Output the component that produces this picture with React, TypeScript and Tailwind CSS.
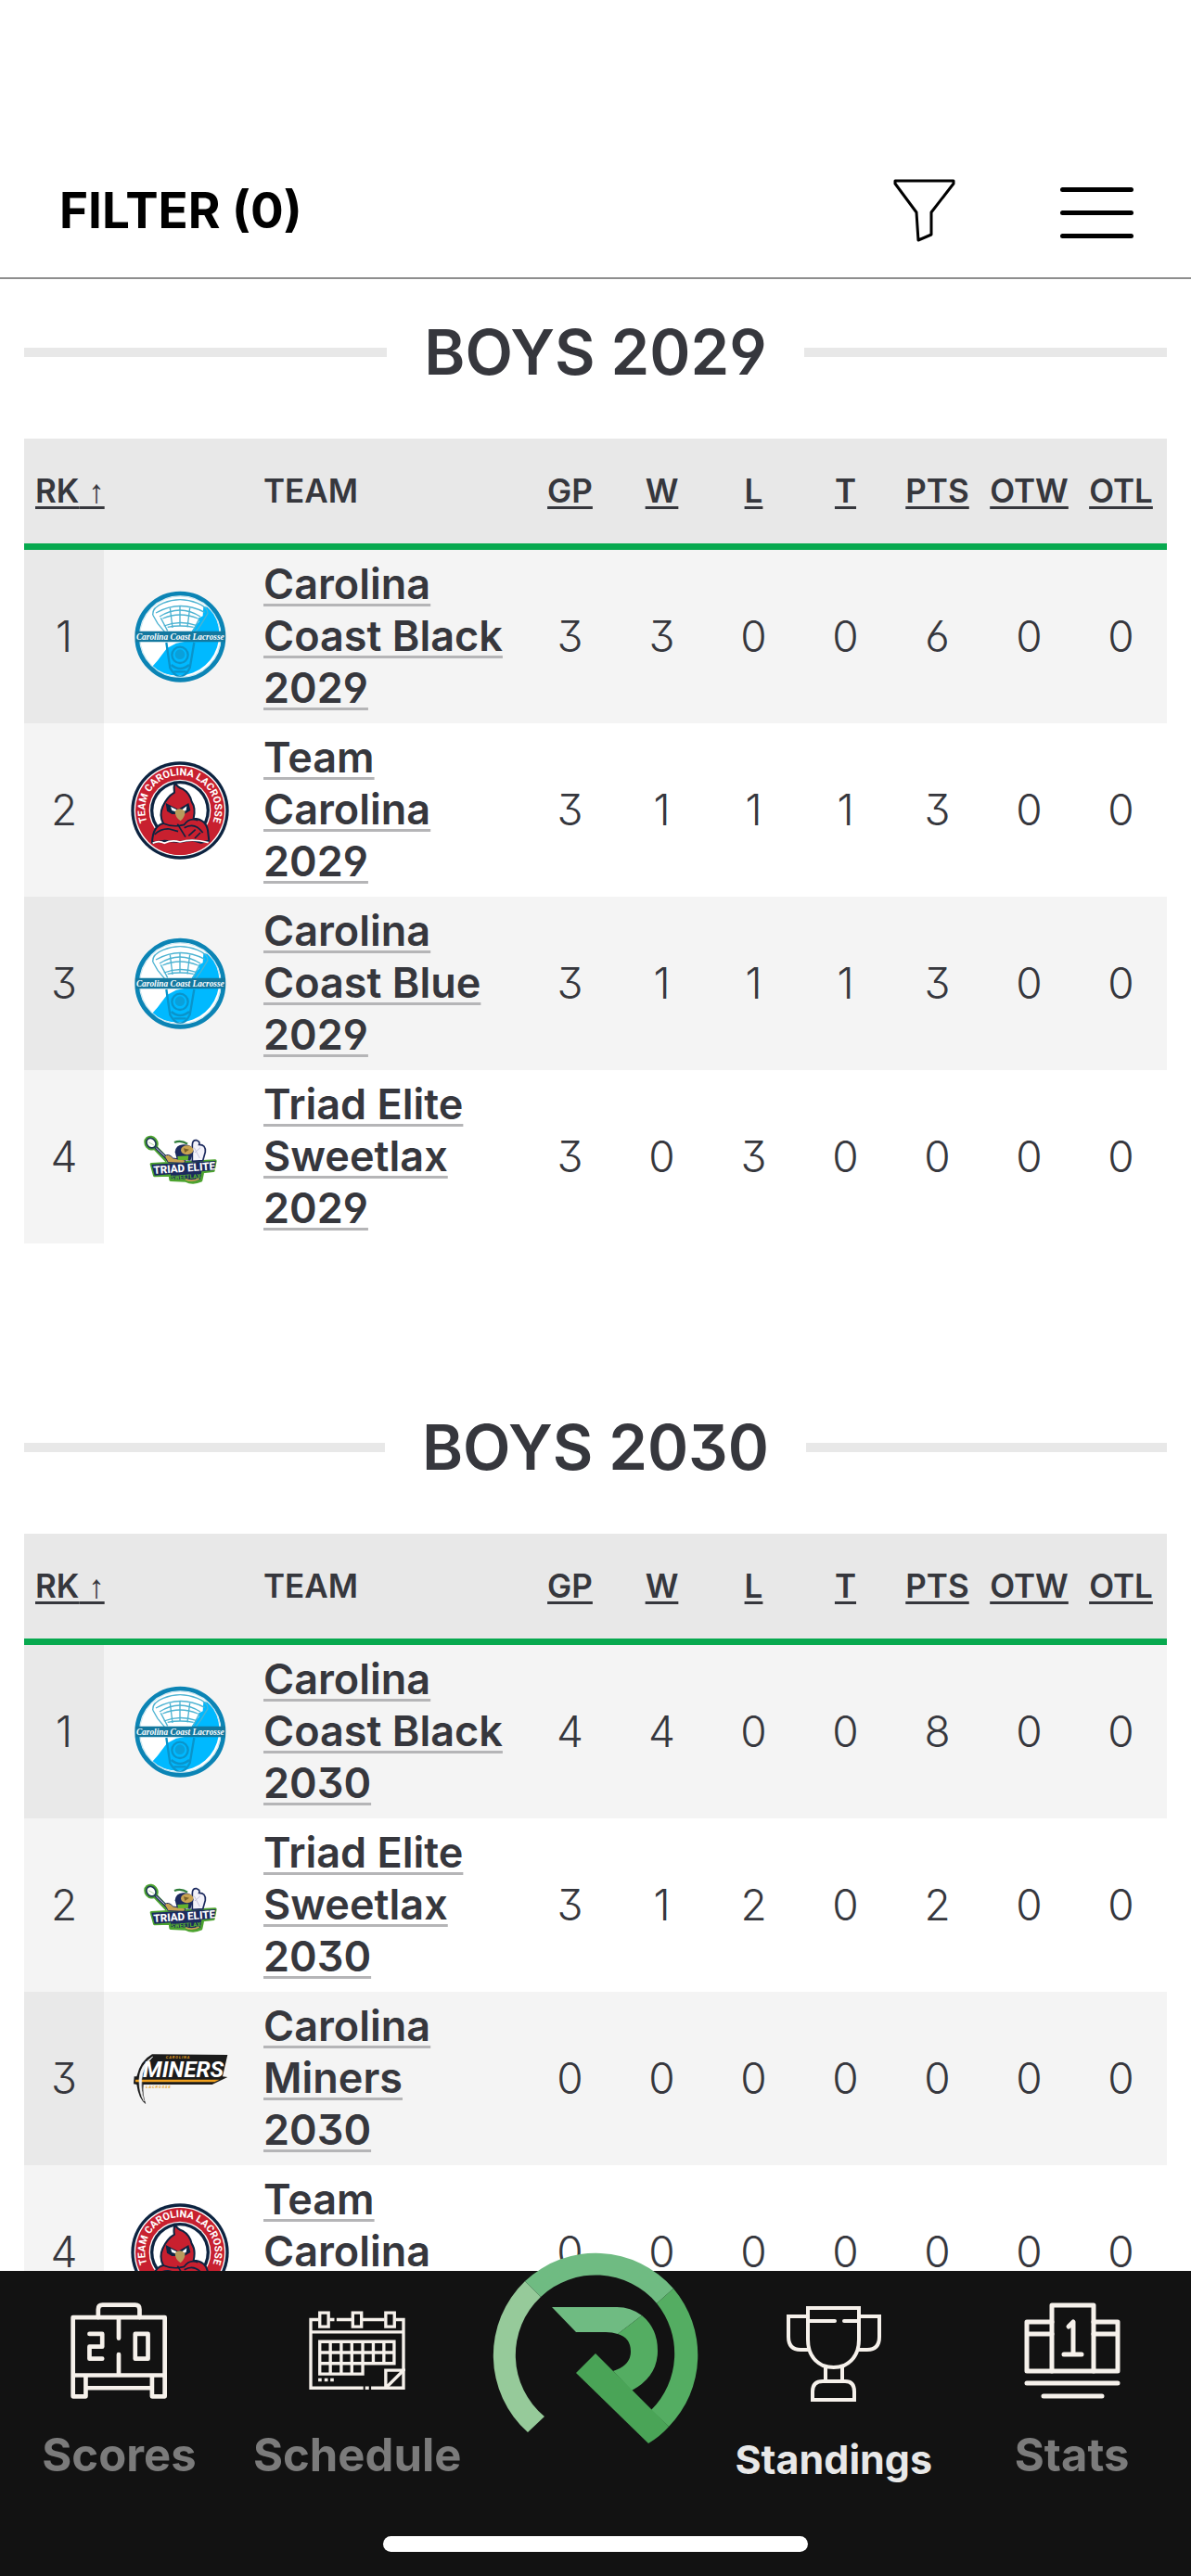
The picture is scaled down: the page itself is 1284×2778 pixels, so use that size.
import { useState } from 'react';
import type { ComponentType } from 'react';

type LogoKey = 'coast' | 'cardinal' | 'triad' | 'miners';

interface Team {
  name: string;
  logo: LogoKey;
  stats: number[];
}

interface Division {
  title: string;
  teams: Team[];
}

const COLUMNS = ['GP', 'W', 'L', 'T', 'PTS', 'OTW', 'OTL'];

const DIVISIONS: Division[] = [
  {
    title: 'BOYS 2029',
    teams: [
      { name: 'Carolina Coast Black 2029', logo: 'coast', stats: [3, 3, 0, 0, 6, 0, 0] },
      { name: 'Team Carolina 2029', logo: 'cardinal', stats: [3, 1, 1, 1, 3, 0, 0] },
      { name: 'Carolina Coast Blue 2029', logo: 'coast', stats: [3, 1, 1, 1, 3, 0, 0] },
      { name: 'Triad Elite Sweetlax 2029', logo: 'triad', stats: [3, 0, 3, 0, 0, 0, 0] },
    ],
  },
  {
    title: 'BOYS 2030',
    teams: [
      { name: 'Carolina Coast Black 2030', logo: 'coast', stats: [4, 4, 0, 0, 8, 0, 0] },
      { name: 'Triad Elite Sweetlax 2030', logo: 'triad', stats: [3, 1, 2, 0, 2, 0, 0] },
      { name: 'Carolina Miners 2030', logo: 'miners', stats: [0, 0, 0, 0, 0, 0, 0] },
      { name: 'Team Carolina 2030', logo: 'cardinal', stats: [0, 0, 0, 0, 0, 0, 0] },
    ],
  },
];

const CoastLogo = () => (
  <svg viewBox="57 35 330 330" className="size-[110px]" aria-hidden="true">
    <circle cx="223" cy="199" r="141" fill="#fff" />
    <path
      d="M298 100 L312 104 L330 122 A134 134 0 0 1 132 296 L150 276 L160 262 L180 236 L210 220 L240 214 L266 172 L284 150 L280 140 L296 132 Z"
      fill="#00b9ff"
    />
    <g fill="none" stroke="#4db3d2" strokeWidth="4">
      <path d="M134 128 Q132 104 168 90 Q222 68 278 90 Q314 104 312 124 L290 160 L268 190" />
      <path d="M134 128 L150 156 L178 190" />
      <path d="M144 122 Q222 78 302 120" />
      <path d="M156 134 Q222 92 288 134" />
      <path d="M166 140 Q222 116 280 140 M170 164 Q222 144 274 162 M182 168 Q222 160 266 168" />
      <path d="M190 106 L198 170 M222 100 L222 164 M254 106 L246 168 M160 138 L182 180 M286 138 L264 180" />
    </g>
    <g fill="none" stroke="#0a94cb" strokeWidth="7">
      <path d="M178 218 L190 300 Q206 328 222 328 Q240 328 254 300 L268 218" />
      <circle cx="222" cy="258" r="26" />
      <path d="M194 290 Q222 314 252 290 M202 312 H242" />
    </g>
    <circle cx="222" cy="256" r="16" fill="#0aa0da" />
    <circle cx="223" cy="199" r="131" fill="none" stroke="#c9e6ef" strokeWidth="3" />
    <circle cx="223" cy="199" r="140" fill="none" stroke="#0b84b5" strokeWidth="14" />
    <path d="M78 181 H368 V216 H78 Z" fill="#13789f" />
    <text
      x="223"
      y="208"
      textAnchor="middle"
      fontSize="28"
      fontStyle="italic"
      fontWeight="700"
      fill="#fff"
      className="font-['Liberation_Serif',serif]"
    >
      Carolina Coast Lacrosse
    </text>
  </svg>
);

const CardinalLogo = () => (
  <svg viewBox="57 29 330 330" className="size-[110px]" aria-hidden="true">
    <circle cx="222" cy="194" r="158" fill="#0c2340" />
    <circle cx="222" cy="194" r="148" fill="#fff" />
    <circle cx="222" cy="194" r="144" fill="#c8202f" />
    <circle cx="222" cy="194" r="100" fill="#fff" />
    <circle cx="222" cy="194" r="96" fill="#0c2340" />
    <circle cx="222" cy="194" r="86" fill="#fff" />
    <path d="M128 290 Q175 306 222 290 Q270 306 316 290 Q284 338 222 338 Q160 338 128 290 Z" fill="#c8202f" />
    <path
      d="M132 298 Q134 244 168 236 Q154 210 166 182 Q180 150 204 136 Q200 120 206 104 Q214 120 230 124 Q254 138 260 166 Q274 186 266 220 Q306 222 312 258 L316 292 L290 298 L262 290 L222 296 L172 292 Z"
      fill="#c8202f"
      stroke="#0c2340"
      strokeWidth="6"
      strokeLinejoin="round"
    />
    <path d="M134 300 Q154 290 172 300 Q196 288 222 296 Q262 284 314 298" fill="none" stroke="#fff" strokeWidth="5" />
    <path d="M176 170 L216 190 L250 170 L256 194 L236 206 L196 206 L180 196 Z" fill="#0c2340" />
    <path d="M192 182 L212 192 L208 198 L196 194 Z M244 180 L228 192 L232 198 L242 194 Z" fill="#fff" />
    <path d="M206 196 Q220 182 238 196 Q240 214 224 228 Q206 216 206 196 Z" fill="#b89b5c" />
    <path
      d="M140 272 Q160 252 188 254 L216 262 M168 236 Q200 250 236 240 Q252 216 280 226 M214 238 L240 280 M236 250 Q270 230 296 266 M250 276 L272 256 M270 284 L288 266"
      fill="none"
      stroke="#0c2340"
      strokeWidth="5"
    />
    <path id="cardinal-arc" d="M126 253 A113 113 0 1 1 318 253" fill="none" />
    <text fontSize="33" fontWeight="700" fill="#fff" className="font-['Roboto',sans-serif]">
      <textPath href="#cardinal-arc" startOffset="50%" textAnchor="middle">
        TEAM CAROLINA LACROSSE
      </textPath>
    </text>
  </svg>
);

const TriadLogo = () => (
  <svg viewBox="57 10 330 330" className="size-[110px]" aria-hidden="true">
    <g fill="#4ca32f" stroke="#4ca32f" strokeWidth="10" strokeLinejoin="round">
      <ellipse cx="129" cy="129" rx="17" ry="20" transform="rotate(-40 129 129)" />
      <path d="M144 146 L182 186" strokeWidth="16" />
      <path d="M130 198 L336 187 L330 218 L296 222 L290 250 Q264 262 240 250 L192 248 L190 232 L140 234 Z" />
    </g>
    <path d="M204 127 Q226 118 246 132" fill="none" stroke="#2f7d3a" strokeWidth="7" />
    <path d="M262 136 Q262 118 276 120 Q288 124 284 134 Q306 134 304 158 L296 186 L262 188 Z" fill="#f3f2fa" stroke="#1c2a5e" strokeWidth="5" />
    <path d="M268 144 L286 178 M288 144 L270 160" stroke="#c3c1dc" strokeWidth="3" />
    <ellipse cx="129" cy="129" rx="14" ry="17" transform="rotate(-40 129 129)" fill="#fff" stroke="#1d3b54" strokeWidth="5" />
    <path d="M120 126 L138 136" stroke="#b5dba6" strokeWidth="3" />
    <path d="M143 143 L186 184" stroke="#1c2a5e" strokeWidth="9" />
    <path d="M145 145 L174 172" stroke="#dfe3ea" strokeWidth="3" />
    <path d="M172 172 Q184 160 200 178 L240 184 L236 194 L184 192 Z" fill="#c9a352" stroke="#1c2a5e" strokeWidth="3" />
    <path d="M206 158 Q208 136 232 134 Q262 132 266 156 L256 186 L212 182 Z" fill="#1c2a5e" />
    <ellipse cx="245" cy="152" rx="20" ry="15" fill="#c9a352" />
    <path d="M234 146 L252 150 L238 160 Z" fill="#7a5f28" />
    <path d="M214 172 L250 170 L248 184 L216 184 Z" fill="#63b32e" />
    <path d="M130 198 L338 187 L332 217 L292 221 L288 246 Q262 258 240 246 L194 246 L192 230 L140 234 Z" fill="#1c2a5e" />
    <path d="M240 246 Q262 256 284 244" stroke="#c9a352" strokeWidth="5" fill="none" />
    <text
      x="236"
      y="222"
      textAnchor="middle"
      fontSize="35"
      fontWeight="800"
      fill="#fff"
      transform="rotate(-4 236 210)"
      className="font-['Roboto',sans-serif]"
    >
      TRIAD ELITE
    </text>
    <text
      x="241"
      y="245"
      textAnchor="middle"
      fontSize="19"
      fontWeight="800"
      fill="#58b030"
      transform="rotate(-3 241 240)"
      className="font-['Roboto',sans-serif]"
    >
      SWEETLAX
    </text>
  </svg>
);

const MinersLogo = () => (
  <svg viewBox="57 -7 330 330" className="size-[110px]" aria-hidden="true">
    <path
      d="M132 78 L376 80 L360 150 L376 152 L326 176 L104 176 Q100 206 112 240 Q88 222 82 176 L72 174 L74 150 L82 150 Q94 98 132 78 Z"
      fill="#1b1b1b"
    />
    <path d="M78 160 H350 L334 168 H78 Z" fill="#f0a01e" />
    <path d="M134 86 Q92 112 90 160 Q90 206 106 230 Q96 196 98 160 Q102 118 134 86 Z" fill="#f2f2f2" stroke="#f2f2f2" strokeWidth="2" />
    <text
      x="102"
      y="152"
      fontSize="73"
      fontWeight="700"
      fontStyle="italic"
      fill="#fff"
      className="font-['Roboto',sans-serif]"
    >
      MINERS
    </text>
    <g fontSize="12" fontWeight="700" fontStyle="italic" fill="#e8a020" className="font-['Roboto',sans-serif]">
      <text x="176" y="93">C  A  R  O  L  I  N  A</text>
      <text x="112" y="188">L  A  C  R  O  S  S  E</text>
    </g>
  </svg>
);

const LOGOS: Record<LogoKey, ComponentType> = {
  coast: CoastLogo,
  cardinal: CardinalLogo,
  triad: TriadLogo,
  miners: MinersLogo,
};

const ScoresIcon = () => (
  <svg viewBox="232 430 310 310" className="size-[104px]" fill="none" stroke="#f6f1eb" strokeWidth="14" strokeLinejoin="round" strokeLinecap="round" aria-hidden="true">
    <path d="M240 478 H535 V732 H494 V664 M240 478 V732 H281 V664 M240 664 H535 M281 705 H494" />
    <path d="M321 478 V452 Q321 438 335 438 H440 Q454 438 454 452 V478" />
    <path d="M387 480 V545 M387 597 V662" />
    <path d="M293 531 H334 V572 H293 V611 H334 M440 531 H481 V611 H440 Z" />
  </svg>
);

const ScheduleIcon = () => (
  <svg viewBox="1003 431 310 310" className="size-[104px]" fill="none" stroke="#f6f1eb" strokeWidth="10" aria-hidden="true">
    <path d="M1034 486 H1009 V706 H1178 M1184 706 H1196 M1203 706 H1307 V486 H1282" />
    <path d="M1070 486 H1085 M1092 486 H1141 M1175 486 H1246 M1009 526 H1307" />
    <path d="M1038 464 H1066 V509 H1038 Z M1144 464 H1172 V509 H1144 Z M1250 464 H1278 V509 H1250 Z" />
    <path d="M1038 557 H1277 V627 H1176 V661 H1038 Z" />
    <path d="M1038 592 H1277 M1038 627 H1176 M1072 557 V661 M1107 557 V661 M1141 557 V661 M1176 557 V627 M1210 557 V627 M1244 557 V627" />
    <path d="M1033 680 H1044 M1053 680 H1064 M1072 680 H1083" />
    <path d="M1250 706 V649 H1307 L1250 706" />
  </svg>
);

const StandingsIcon = () => (
  <svg viewBox="0 0 104 104" className="size-[104px]" fill="none" stroke="#f6f1eb" strokeWidth="4" aria-hidden="true">
    <path d="M24 2 H79 V36 Q79 56 63 64 Q52 68 40 64 Q24 56 24 36 Z" />
    <path d="M24 11 H3 V33 Q3 47 16 47 H26 M79 11 H101 V33 Q101 47 88 47 H77" />
    <path d="M26 16 H53 M63 16 H78" strokeLinecap="round" />
    <path d="M43 65 V81 M61 65 V81 M29 101 V92 Q29 81 40 81 H64 Q74 81 74 92 V101 Z" />
  </svg>
);

const StatsIcon = () => (
  <svg viewBox="0 0 104 104" className="size-[104px]" fill="none" stroke="#f6f1eb" strokeWidth="5" strokeLinejoin="round" strokeLinecap="round" aria-hidden="true">
    <path d="M30 21 H3 V74 H101 V21 H75 M3 34 H30 M75 34 H101" />
    <path d="M30 74 V3 H75 V74" />
    <path d="M48 26 L53 21 V56 M43 56 H62" />
    <path d="M3 87 H101 M21 101 H84" />
  </svg>
);

const BrandMark = () => (
  <svg viewBox="0 0 222 208" className="h-[208px] w-[222px]" aria-hidden="true">
    <path d="M38 194 A111 111 0 0 1 35 31 L52 48 A86 86 0 0 0 56 177 Z" fill="#96ca9a" />
    <path d="M35 31 A111 111 0 0 1 195 39 L177 55 A86 86 0 0 0 52 48 Z" fill="#6fbb82" />
    <path d="M195 39 A111 111 0 0 1 190 188 L171 170 A86 86 0 0 0 177 55 Z" fill="#54ad62" />
    <path d="M64 59 H134 Q149 59 161 68 L135 88 Q129 86 122 86 H90 Z" fill="#6fbb82" />
    <path d="M161 68 Q178 82 178 106 Q178 134 150 149 L130 128 Q149 122 149 107 Q149 92 135 88 Z" fill="#54ad62" />
    <path d="M111 109 L190 188 Q180 199 168 206 L90 130 Z" fill="#4aa457" />
  </svg>
);

const StandingsTable = ({ division }: { division: Division }) => (
  <section className="mb-[181px]">
    <div className="mb-[54px] flex items-center gap-10">
      <span className="h-[10px] flex-1 bg-[#e8e8e8]" />
      <h2 className="text-[67px] leading-[78px] font-semibold">{division.title}</h2>
      <span className="h-[10px] flex-1 bg-[#e8e8e8]" />
    </div>

    <table className="w-full table-fixed border-separate border-spacing-0">
      <thead>
        <tr className="bg-[#e8e8e8] text-[35px] [&>th]:h-[120px] [&>th]:border-b-[7px] [&>th]:border-[#07a94f] [&>th]:p-0 [&>th]:font-semibold">
          <th className="w-[86px] text-left">
            <button className="pl-3 whitespace-nowrap underline decoration-3 underline-offset-4">
              RK
              <span className="font-['Liberation_Sans',sans-serif] font-normal"> ↑</span>
            </button>
          </th>
          <th className="w-[164px]" aria-label="Logo" />
          <th className="text-left">
            <span className="pl-2">TEAM</span>
          </th>
          {COLUMNS.map((c) => (
            <th key={c} className="w-[99px]">
              <button className="underline decoration-3 underline-offset-4">{c}</button>
            </th>
          ))}
        </tr>
      </thead>
      <tbody>
        {division.teams.map((team, i) => {
          const Logo = LOGOS[team.logo];
          return (
            <tr key={team.name} className="odd:bg-[#f4f4f4]">
              <td className="bg-black/[0.045] text-center text-[46px] font-light">{i + 1}</td>
              <td>
                <div className="flex justify-center">
                  <Logo />
                </div>
              </td>
              <td className="pt-[9px] pr-3 pb-[10px] pl-2 text-[45px] leading-[56px] font-semibold">
                <a
                  href="#team"
                  className="underline decoration-[#b5b5b7] decoration-3 underline-offset-[5px] [text-decoration-skip-ink:none]"
                >
                  {team.name}
                </a>
              </td>
              {team.stats.map((s, j) => (
                <td key={COLUMNS[j]} className="text-center text-[46px] font-light">
                  {s}
                </td>
              ))}
            </tr>
          );
        })}
      </tbody>
    </table>
  </section>
);

const TABS = [
  { label: 'Scores', icon: ScoresIcon },
  { label: 'Schedule', icon: ScheduleIcon },
  { label: 'Home', icon: null },
  { label: 'Standings', icon: StandingsIcon },
  { label: 'Stats', icon: StatsIcon },
];

export default function App() {
  const [active, setActive] = useState('Standings');

  return (
    <div className="flex h-screen flex-col bg-white font-['Inter',sans-serif] text-[#36373d] [font-feature-settings:'cv03','cv04','cv09']">
      <header className="flex items-center justify-between border-b-2 border-[#8e8e8e] pt-[191px] pr-[62px] pb-9 pl-16 text-black">
        <p className="text-[53px] leading-[72px] font-bold">FILTER (0)</p>
        <div className="flex items-center gap-28">
          <button aria-label="Filter">
            <svg viewBox="963 192 69 70" className="h-[70px] w-[69px]" fill="none" stroke="currentColor" strokeWidth="3" strokeLinejoin="round">
              <path d="M966 195 H1029 V198 L1005 229 V253 L991 259 L989 229 L966 198 Z" />
            </svg>
          </button>
          <button aria-label="Menu" className="flex flex-col gap-5 pt-1">
            <span className="h-[5px] w-[79px] rounded-full bg-black" />
            <span className="h-[5px] w-[79px] rounded-full bg-black" />
            <span className="h-[5px] w-[79px] rounded-full bg-black" />
          </button>
        </div>
      </header>

      <main className="min-h-0 flex-1 overflow-y-auto px-[26px] pt-10 [scrollbar-width:none]">
        {DIVISIONS.map((d) => (
          <StandingsTable key={d.title} division={d} />
        ))}
      </main>

      <nav className="relative z-10 bg-[#121212] pb-[26px]">
        <div className="grid h-[260px] grid-cols-5 items-start">
          {TABS.map(({ label, icon: Icon }) =>
            Icon ? (
              <button
                key={label}
                onClick={() => setActive(label)}
                className={
                  label === active
                    ? 'flex flex-col items-center gap-8 pt-[38px] text-[43px] leading-[58px] font-bold text-[#e8e8e8]'
                    : 'flex flex-col items-center gap-8 pt-[34px] text-[49px] leading-[58px] font-bold text-[#7b7b7b]'
                }
              >
                <Icon />
                {label}
              </button>
            ) : (
              <button key={label} aria-label={label} className="-mt-5 flex justify-center">
                <BrandMark />
              </button>
            )
          )}
        </div>
        <div className="mx-auto mt-[26px] h-[17px] w-[458px] rounded-full bg-white" />
      </nav>
    </div>
  );
}
